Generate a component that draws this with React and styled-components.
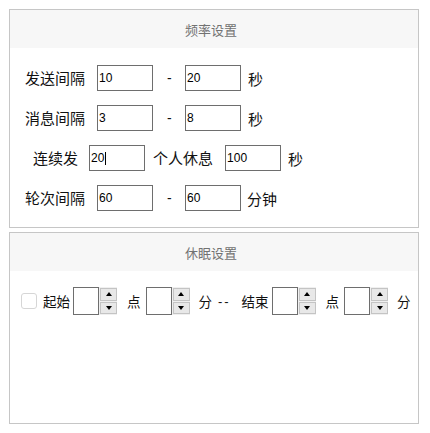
import React from "react"
import styled, { createGlobalStyle } from "styled-components"

const GlobalStyle = createGlobalStyle`
  body {
    margin: 0;
    padding: 9px 0 0 9px;
    background: #fff;
    font-family: "Noto Sans CJK SC", "Noto Sans", sans-serif;
    color: #111;
  }
`

const FREQ = [
  { label: "发送间隔", from: "10", to: "20", unit: "秒" },
  { label: "消息间隔", from: "3", to: "8", unit: "秒" },
]

const App = () => {
  return (
    <>
      <GlobalStyle />
      <Page>
        <Panel $height={219}>
          <PanelHeader>频率设置</PanelHeader>
          <FreqBody>
            {FREQ.map(row => (
              <Row key={row.label} $indent={15}>
                <Label>{row.label}</Label>
                <Field defaultValue={row.from} readOnly />
                <Dash>-</Dash>
                <Field defaultValue={row.to} readOnly />
                <Unit $gap={7}>{row.unit}</Unit>
              </Row>
            ))}
            <Row $indent={23}>
              <Label $gap={11}>连续发</Label>
              <CaretWrap>
                <Field defaultValue="20" readOnly />
                <Caret />
              </CaretWrap>
              <Label $gap={12} $lead={8}>个人休息</Label>
              <Field defaultValue="100" readOnly />
              <Unit $gap={7}>秒</Unit>
            </Row>
            <Row $indent={15}>
              <Label>轮次间隔</Label>
              <Field defaultValue="60" readOnly />
              <Dash>-</Dash>
              <Field defaultValue="60" readOnly />
              <Unit $gap={6}>分钟</Unit>
            </Row>
          </FreqBody>
        </Panel>

        <Panel $height={192}>
          <PanelHeader>休眠设置</PanelHeader>
          <SleepRow>
            <Check />
            <SmallText $lead={6} $gap={3}>起始</SmallText>
            <Spinner />
            <SmallText $lead={10} $gap={5}>点</SmallText>
            <Spinner />
            <SmallText $lead={9}>分</SmallText>
            <Sep>--</Sep>
            <SmallText $gap={3}>结束</SmallText>
            <Spinner />
            <SmallText $lead={10} $gap={5}>点</SmallText>
            <Spinner />
            <SmallText $lead={9}>分</SmallText>
          </SleepRow>
        </Panel>
      </Page>
    </>
  )
}

const Spinner = () => (
  <SpinWrap>
    <SpinField readOnly />
    <SpinButtons>
      <SpinButton><Arrow $up /></SpinButton>
      <SpinButton><Arrow /></SpinButton>
    </SpinButtons>
  </SpinWrap>
)

export default App


const Page = styled.div`
  display: flex;
  flex-direction: column;
  gap: 4px;
  width: 410px;
`

const Panel = styled.section`
  box-sizing: border-box;
  height: ${p => p.$height}px;
  border: 1px solid #c6c6c6;
  display: flex;
  flex-direction: column;
`

const PanelHeader = styled.div`
  height: 38px;
  background: #f7f7f7;
  display: flex;
  align-items: center;
  justify-content: center;
  font-size: 13px;
  color: #727272;
  padding-right: 6px;
`

const FreqBody = styled.div`
  display: flex;
  flex-direction: column;
  gap: 14px;
  padding-top: 17px;
`

const Row = styled.div`
  display: flex;
  align-items: center;
  height: 26px;
  padding-left: ${p => p.$indent}px;
`

const Label = styled.span`
  font-size: 15px;
  line-height: 26px;
  margin-left: ${p => p.$lead || 0}px;
  margin-right: ${p => (p.$gap === undefined ? 12 : p.$gap)}px;
  white-space: nowrap;
`

const Unit = styled.span`
  font-size: 15px;
  margin-left: ${p => p.$gap}px;
`

const Field = styled.input`
  box-sizing: border-box;
  width: 56px;
  height: 26px;
  border: 1px solid #6e6e6e;
  padding: 0 0 0 1px;
  margin: 0;
  font-family: "Liberation Sans", Arial, sans-serif;
  font-size: 12px;
  color: #000;
  background: #fff;
  outline: none;
`

const Dash = styled.span`
  width: 32px;
  font-family: "Liberation Sans", Arial, sans-serif;
  font-size: 14px;
  text-align: left;
  padding-left: 14px;
  box-sizing: border-box;
`

const CaretWrap = styled.span`
  position: relative;
  display: inline-flex;
`

const Caret = styled.span`
  position: absolute;
  left: 16px;
  top: 7px;
  width: 1px;
  height: 13px;
  background: #000;
`

const SleepRow = styled.div`
  display: flex;
  align-items: center;
  height: 28px;
  margin-top: 16px;
  padding-left: 11px;
`

const Check = styled.span`
  box-sizing: border-box;
  width: 16px;
  height: 16px;
  border: 1px solid #d6d6d6;
  border-radius: 3px;
  background: #fff;
`

const SmallText = styled.span`
  font-size: 13.5px;
  margin-left: ${p => p.$lead || 0}px;
  margin-right: ${p => p.$gap || 0}px;
  white-space: nowrap;
`

const Sep = styled.span`
  box-sizing: border-box;
  width: 29.5px;
  padding-left: 6px;
  font-family: "Liberation Sans", Arial, sans-serif;
  font-size: 13px;
  letter-spacing: 2px;
  white-space: nowrap;
`

const SpinWrap = styled.span`
  display: flex;
  height: 28px;
`

const SpinField = styled.input`
  box-sizing: border-box;
  width: 26px;
  height: 28px;
  margin: 0;
  padding: 0;
  border: 1px solid #6e6e6e;
  background: #fff;
  outline: none;
`

const SpinButtons = styled.span`
  display: flex;
  flex-direction: column;
  width: 18px;
  padding: 1px 0 0 1px;
  box-sizing: border-box;
  background: #f0f0f0;
`

const SpinButton = styled.span`
  flex: 1;
  box-sizing: border-box;
  display: flex;
  align-items: center;
  justify-content: center;
  background: #e8e8e8;
  border: 1px solid #c4c4c4;
  margin-bottom: 1px;
`

const Arrow = styled.span`
  width: 0;
  height: 0;
  border-left: 3.5px solid transparent;
  border-right: 3.5px solid transparent;
  ${p => p.$up
    ? "border-bottom: 4px solid #000;"
    : "border-top: 4px solid #000;"}
`
